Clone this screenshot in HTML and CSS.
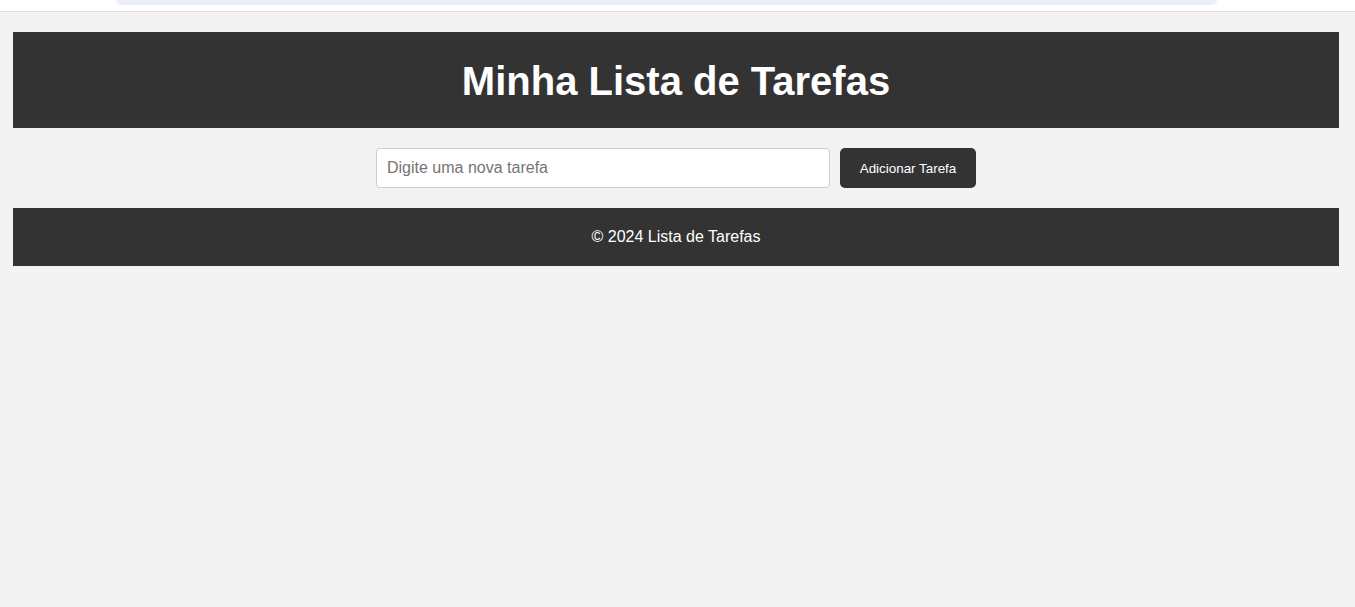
FILE: index.html
```html
<!DOCTYPE html>
<html lang="pt-BR">
<head>
<meta charset="utf-8">
<title>Minha Lista de Tarefas</title>
<link rel="stylesheet" href="styles.css">
</head>
<body>
<div class="topbar"><div class="topbar-pill"></div></div>
<div class="page">
  <header class="header"><h1>Minha Lista de Tarefas</h1></header>
  <div class="add-row">
    <input class="task-input" type="text" placeholder="Digite uma nova tarefa">
    <button class="add-btn" type="button">Adicionar Tarefa</button>
  </div>
  <footer class="footer">© 2024 Lista de Tarefas</footer>
</div>
</body>
</html>
```
FILE: styles.css
```css
html, body {
  margin: 0;
  padding: 0;
  background: #f3f3f3;
  font-family: "Liberation Sans", Arial, sans-serif;
  height: 100%;
}
.topbar {
  height: 11px;
  background: #ffffff;
  border-bottom: 1px solid #dedede;
  display: flex;
  padding-left: 116px;
  padding-right: 138px;
}
.topbar-pill {
  flex: 1;
  height: 5px;
  background: #ebeff8;
  border-radius: 0 0 14px 14px;
}
.page {
  padding: 20px 16px 0 13px;
  display: flex;
  flex-direction: column;
  gap: 20px;
}
.header {
  background: #333333;
  height: 96px;
  display: flex;
  align-items: center;
  justify-content: center;
}
.header h1 {
  margin: 0;
  color: #ffffff;
  font-size: 40px;
  font-weight: bold;
  line-height: 46px;
  padding-top: 2px;
}
.add-row {
  display: flex;
  justify-content: center;
  gap: 10px;
}
.task-input {
  width: 454px;
  height: 40px;
  box-sizing: border-box;
  border: 1px solid #cccccc;
  border-radius: 4px;
  background: #ffffff;
  padding: 0 10px;
  font-family: "Liberation Sans", Arial, sans-serif;
  font-size: 16px;
  color: #333;
  outline: none;
}
.task-input::placeholder {
  color: #757575;
}
.add-btn {
  width: 136px;
  height: 40px;
  border: none;
  border-radius: 5px;
  background: #333333;
  color: #ffffff;
  font-family: "Liberation Sans", Arial, sans-serif;
  font-size: 13.4px;
  padding: 0;
  cursor: pointer;
}
.footer {
  background: #333333;
  color: #ffffff;
  text-align: center;
  font-size: 16px;
  line-height: 18px;
  padding: 20px 0;
}
```
